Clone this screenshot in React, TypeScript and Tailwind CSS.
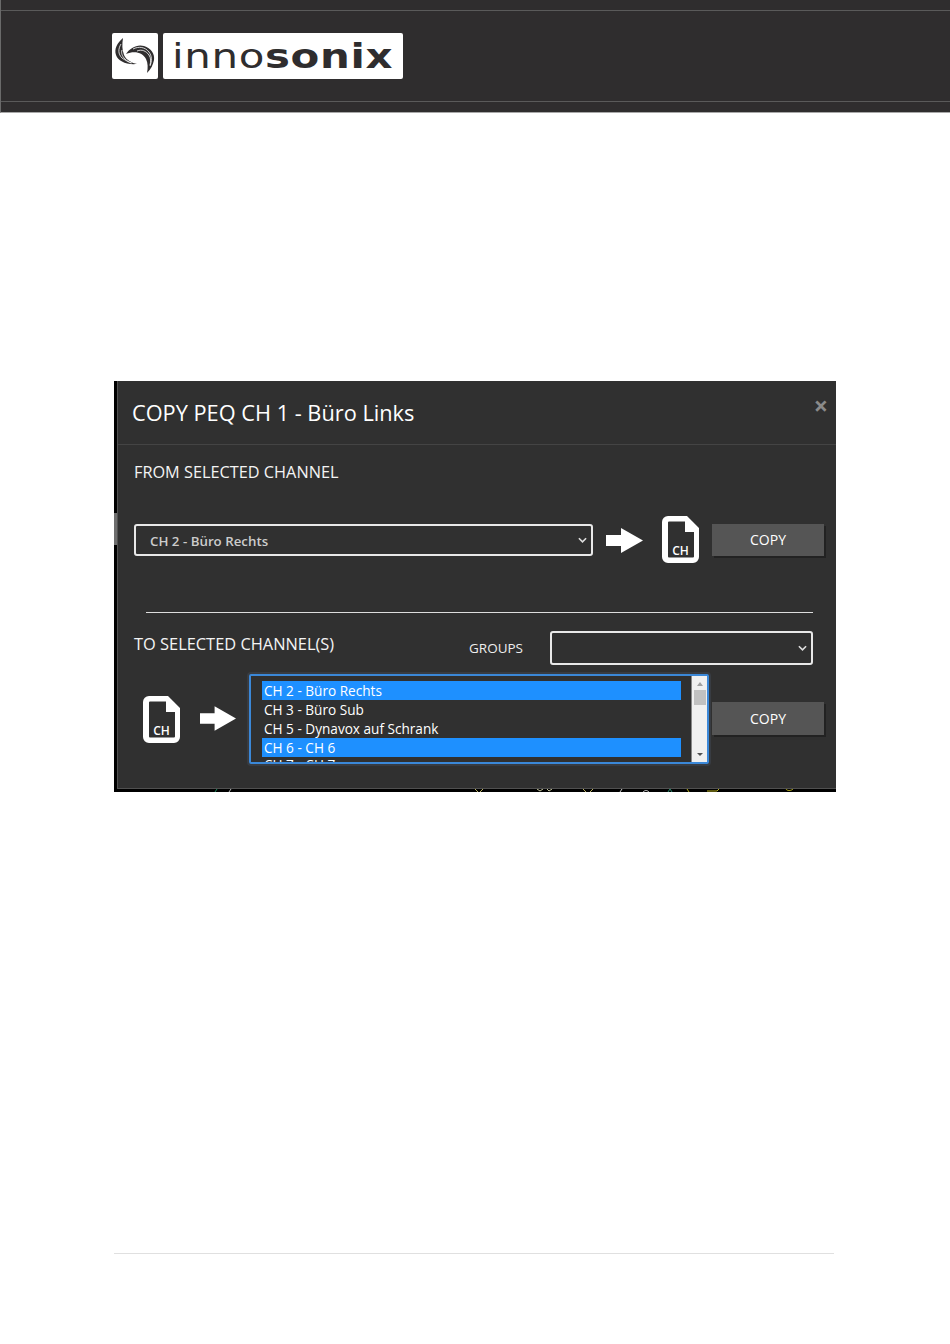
import React from 'react';

const FONT = { fontFamily: '"Open Sans", sans-serif' };

function Swirl() {
  return (
    <svg viewBox="0 0 46 46" className="w-[46px] h-[46px]">
      <path d="M11 5C5 10 2 16 4 22c2 6 10 10 21 9-5-1-11-4-13-9-2-5-2-11-1-17z" fill="#2f2d2e" />
      <path d="M14 21c4-6 11-10 18-8 7 2 11 8 10 14-1 5-3 9-7 13 1-5 1-10-1-14-3-6-11-9-20-5z" fill="#2f2d2e" />
      <g fill="none" stroke="#fff" strokeWidth="0.8">
        <path d="M9 11C6 16 6 21 10 25c3 2 6 4 10 5" />
        <path d="M10 17c-1 3 0 6 3 9 2 2 4 3 6 4" />
        <path d="M21 16c6-3 12-2 16 3 3 4 3 9 1 14" />
        <path d="M25 18c5-2 9 0 12 4 2 3 2 7 1 10" />
      </g>
    </svg>
  );
}

function Logo() {
  return (
    <div className="flex gap-[5px]">
      <div className="w-[46px] h-[46px] bg-white rounded-[2px]">
        <Swirl />
      </div>
      <div className="w-[240px] h-[46px] bg-white rounded-[2px] flex items-center pl-[9px] text-[#2f2d2e] leading-none overflow-hidden">
        <span
          className="text-[33px] tracking-[0.5px] scale-x-[1.27] origin-left whitespace-nowrap"
          style={{ fontFamily: '"DejaVu Sans", sans-serif' }}
        >
          <span className="font-normal">inno</span>
          <span className="font-bold">sonix</span>
        </span>
      </div>
    </div>
  );
}

function FileIcon() {
  return (
    <div className="relative w-[37px] h-[47px]">
      <svg viewBox="0 0 37 47" className="w-[37px] h-[47px]">
        <path
          d="M6 0h19l12 12v29a6 6 0 0 1-6 6H6a6 6 0 0 1-6-6V6a6 6 0 0 1 6-6z M7 5.500a1 1 0 0 0-1 1v34a1 1 0 0 0 1 1h24a1 1 0 0 0 1-1V16H23V5.500z"
          fill="#fff"
          fillRule="evenodd"
        />
      </svg>
      <span className="absolute left-0 right-0 bottom-[6px] text-center text-[12px] font-semibold leading-none text-white">CH</span>
    </div>
  );
}

function Arrow({ className }: { className: string }) {
  return (
    <svg viewBox="0 0 37 25" className={className}>
      <path d="M0 7h15V0l22 12.500L15 25v-7H0z" fill="#fff" />
    </svg>
  );
}

function Chevron() {
  return (
    <svg viewBox="0 0 10 6" className="w-[9px] h-[6px]" fill="none" stroke="#ddd" strokeWidth="1.800">
      <path d="M1 1l4 4 4-4" />
    </svg>
  );
}

function CopyButton({ className }: { className: string }) {
  return (
    <div className={`w-[112px] bg-[#555555] shadow-[2px_2px_0_#222222] flex items-center justify-center text-[14px] text-white ${className}`}>
      COPY
    </div>
  );
}

const channels = [
  { label: 'CH 2 - Büro Rechts', selected: true },
  { label: 'CH 3 - Büro Sub', selected: false },
  { label: 'CH 5 - Dynavox auf Schrank', selected: false },
  { label: 'CH 6 - CH 6', selected: true },
  { label: 'CH 7 - CH 7', selected: false },
];

function ChannelList() {
  return (
    <div className="w-[460px] h-[90px] border-2 border-[#3b88d8] rounded-[2px] flex overflow-hidden shadow-[0_0_0_2px_#383c42]">
      <div className="w-[440px] pl-[11px] pt-[5px] overflow-hidden">
        {channels.map(ch => (
          <div
            key={ch.label}
            className={`w-[419px] h-[19px] shrink-0 pl-[2px] text-[13.6px] leading-[19px] last:leading-[15px] text-white ${ch.selected ? 'bg-[#1e90ff]' : ''}`}
          >
            {ch.label}
          </div>
        ))}
      </div>
      <div className="w-[16px] bg-[#f0f0f0] border-l border-[#888] flex flex-col items-center justify-between py-[6px]">
        <div className="flex flex-col items-center">
          <div className="w-0 h-0 border-x-[3px] border-x-transparent border-b-[4px] border-b-[#a0a0a0] mb-[4px]" />
          <div className="w-[12px] h-[15px] bg-[#c1c1c1]" />
        </div>
        <div className="w-0 h-0 border-x-[3px] border-x-transparent border-t-[3px] border-t-[#505050]" />
      </div>
    </div>
  );
}

// bits of the plot behind the dialog that stick out under it
function PlotStrip() {
  return (
    <svg viewBox="0 0 719 3" className="w-[719px] h-[3px] block" fill="none" strokeWidth="1">
      <path d="M98 3l2-3" stroke="#1f8a5f" />
      <path d="M112 3l2-3" stroke="#bbbbbb" />
      <path d="M358 0l3 3M366 0l-3 3" stroke="#b8b060" />
      <path d="M420 0l3 2 3-2M430 0l2 2 3-2" stroke="#c9c9a0" />
      <path d="M466 0l3 3M476 0l-3 3" stroke="#b8b060" />
      <path d="M503 3l2-3" stroke="#cccccc" />
      <path d="M526 3c2-2 4-2 6 0" stroke="#cccccc" />
      <path d="M551 3l2-3 2 3" stroke="#2a8a70" />
      <path d="M570 0l2 3" stroke="#b8b020" />
      <path d="M590 2h10l2-2" stroke="#b8b020" />
      <path d="M669 0c1 2 5 2 7 0" stroke="#b8b020" />
    </svg>
  );
}

export default function App() {
  return (
    <div className="w-[950px] h-[1344px] bg-white flex flex-col" style={FONT}>
      <header className="h-[113px] bg-[#2f2d2e] border-l border-l-[#6a6a6a] border-b border-b-[#a8a8a8] flex flex-col shrink-0">
        <div className="h-[10px]" />
        <div className="h-[92px] border-y border-[#5a5a5a] pl-[111px] pt-[22px]">
          <Logo />
        </div>
      </header>

      <section className="mt-[268px] ml-[114px] w-[722px] h-[411px] flex bg-black shrink-0">
        <div className="w-[3px] flex flex-col pt-[132px] shrink-0">
          <div className="h-[32px] bg-[#6e6e6e]" />
        </div>
        <div className="flex-1 flex flex-col">
          <div className="h-[408px] bg-[#303030] border-l border-b border-[#505050] text-white">
            <div className="h-[64px] border-b border-[#444444] flex items-center justify-between pl-[14px] pr-[8px]">
              <span className="text-[21.75px] leading-none text-white pt-[1px]">COPY PEQ CH 1 - Büro Links</span>
              <span className="text-[25px] font-bold leading-none text-[#8a8a8a] mb-[14px]">×</span>
            </div>

            <div className="pl-[16px] pr-[11px]">
              <div className="mt-[17px] h-[20px] text-[16.3px] leading-[20px] text-[#f4f4f4]">FROM SELECTED CHANNEL</div>

              <div className="mt-[34px] flex items-start">
                <div className="mt-[8px] w-[459px] h-[32px] border-2 border-[#e8e8e8] rounded-[3px] flex items-center justify-between pl-[14px] pr-[4px] text-[13.3px] font-semibold text-[#cccccc]">
                  <span className="pt-[3px]">CH 2 - Büro Rechts</span>
                  <Chevron />
                </div>
                <div className="ml-[13px] mt-[12px]"><Arrow className="w-[37px] h-[25px]" /></div>
                <div className="ml-[19px]"><FileIcon /></div>
                <div className="ml-[13px] mt-[8px]"><CopyButton className="h-[32px] pb-[2px]" /></div>
              </div>

              <div className="mt-[49px] ml-[12px] mr-[12px] h-px bg-[#dddddd]" />

              <div className="mt-[18px] flex items-center h-[34px]">
                <div className="w-[335px] text-[16.4px] leading-[20px] text-[#f4f4f4] mb-[8px]">TO SELECTED CHANNEL(S)</div>
                <div className="w-[81px] text-[13.5px] text-[#eeeeee]">GROUPS</div>
                <div className="w-[263px] h-[34px] border-2 border-[#e8e8e8] rounded-[3px] flex items-center justify-end pr-[4px]">
                  <Chevron />
                </div>
              </div>

              <div className="mt-[9px] flex items-start">
                <div className="ml-[9px] mt-[22px]"><FileIcon /></div>
                <div className="ml-[20px] mt-[32px]"><Arrow className="w-[36px] h-[25px]" /></div>
                <div className="ml-[13px]"><ChannelList /></div>
                <div className="ml-[3px] mt-[28px]"><CopyButton className="h-[33px]" /></div>
              </div>
            </div>
          </div>
          <PlotStrip />
        </div>
      </section>

      <div className="mt-[461px] ml-[114px] w-[720px] h-px bg-[#e0e0e0] shrink-0" />
    </div>
  );
}
